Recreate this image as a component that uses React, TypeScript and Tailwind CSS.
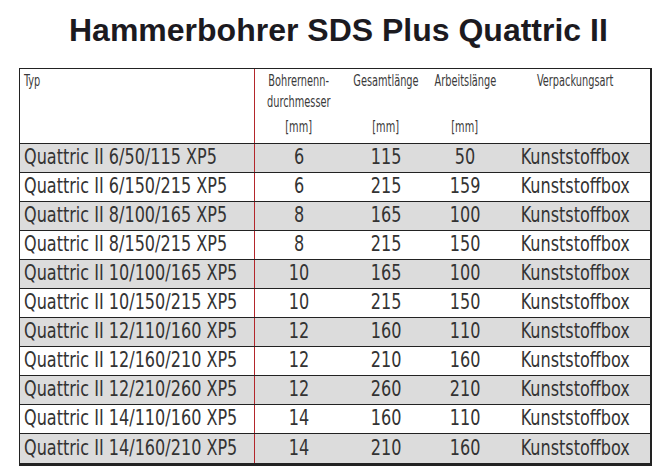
const rows = [
  ["Quattric II 6/50/115 XP5", "6", "115", "50"],
  ["Quattric II 6/150/215 XP5", "6", "215", "159"],
  ["Quattric II 8/100/165 XP5", "8", "165", "100"],
  ["Quattric II 8/150/215 XP5", "8", "215", "150"],
  ["Quattric II 10/100/165 XP5", "10", "165", "100"],
  ["Quattric II 10/150/215 XP5", "10", "215", "150"],
  ["Quattric II 12/110/160 XP5", "12", "160", "110"],
  ["Quattric II 12/160/210 XP5", "12", "210", "160"],
  ["Quattric II 12/210/260 XP5", "12", "260", "210"],
  ["Quattric II 14/110/160 XP5", "14", "160", "110"],
  ["Quattric II 14/160/210 XP5", "14", "210", "160"],
]

// condensed look: DejaVu Sans Condensed squeezed a bit more
function Narrow({ children, left }: { children: React.ReactNode; left?: boolean }) {
  return (
    <span className={`inline-block whitespace-nowrap scale-x-[0.68] ${left ? "origin-left" : "origin-center"}`}>
      {children}
    </span>
  )
}

function Cell({ children, left }: { children: React.ReactNode; left?: boolean }) {
  return (
    <span className={`inline-block whitespace-nowrap scale-x-[0.85] ${left ? "origin-left" : "origin-center"}`}>
      {children}
    </span>
  )
}

export default function App() {
  return (
    <div className="w-[661px] h-[469px] bg-white overflow-hidden">
      <h1 className="pt-[10px] pl-[69px] h-[68px] text-[32px] font-bold leading-[40px] text-[#1c1a1f] font-['Liberation_Sans',Arial,sans-serif]">
        Hammerbohrer SDS Plus Quattric II
      </h1>
      <div className="ml-[19px] w-[633px] border-t border-l border-r-2 border-b-[3px] border-[#222] font-['DejaVu_Sans_Condensed','DejaVu_Sans',sans-serif]">
        {/* header */}
        <div className="flex h-[75px] text-[16px] text-[#3a3a3a] border-b border-[#222]">
          <div className="w-[235px] pl-[4px] pt-[1px] leading-[21px] border-r border-[#b3262b]">
            <Narrow left>Typ</Narrow>
          </div>
          <div className="w-[88px] flex flex-col items-center pt-[1px] leading-[21px]">
            <Narrow>Bohrernenn-</Narrow>
            <Narrow>durchmesser</Narrow>
            <span className="mt-[4px]"><Narrow>[mm]</Narrow></span>
          </div>
          <div className="w-[86px] flex flex-col items-center pt-[1px] leading-[21px]">
            <Narrow>Gesamtlänge</Narrow>
            <span className="mt-[25px]"><Narrow>[mm]</Narrow></span>
          </div>
          <div className="w-[72px] flex flex-col items-center pt-[1px] leading-[21px]">
            <Narrow>Arbeitslänge</Narrow>
            <span className="mt-[25px]"><Narrow>[mm]</Narrow></span>
          </div>
          <div className="flex-1 flex flex-col items-center pt-[1px] leading-[21px]">
            <Narrow>Verpackungsart</Narrow>
          </div>
        </div>
        {rows.map((r, i) => (
          <div
            key={i}
            className={`flex h-[29px] items-center text-[21px] text-[#333] ${i % 2 === 0 ? "bg-[#dcdcdc]" : "bg-white"} ${i < rows.length - 1 ? "border-b border-[#222]" : ""}`}
          >
            <div className="w-[235px] h-full flex items-center pl-[4px] border-r border-[#b3262b]">
              <Cell left>{r[0]}</Cell>
            </div>
            <div className="w-[88px] text-center"><Cell>{r[1]}</Cell></div>
            <div className="w-[86px] text-center"><Cell>{r[2]}</Cell></div>
            <div className="w-[72px] text-center"><Cell>{r[3]}</Cell></div>
            <div className="flex-1 text-center"><Cell>Kunststoffbox</Cell></div>
          </div>
        ))}
      </div>
    </div>
  )
}
